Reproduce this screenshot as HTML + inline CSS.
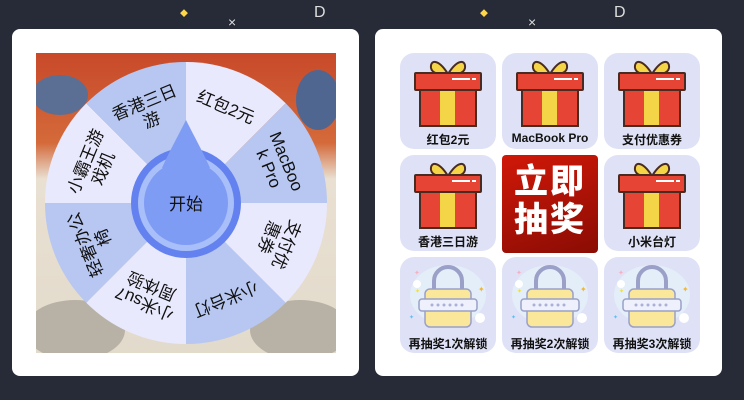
<!DOCTYPE html>
<html><head><meta charset="utf-8"><style>
body{margin:0;width:744px;height:400px;background:#262b37;overflow:hidden;position:relative;font-family:"Liberation Sans","Noto Sans CJK SC",sans-serif}
.card{position:absolute;top:29px;width:347px;height:347px;background:#fff;border-radius:8px}
.cell{position:absolute;width:96px;height:96px;background:#dfe2f6;border-radius:14px;overflow:hidden}
.cell .t{position:absolute;left:0;right:0;top:78px;text-align:center;font-size:12px;font-weight:bold;color:#111;white-space:nowrap}
.go{position:absolute;left:502px;top:155px;width:96px;height:98px;border-radius:4px;background:linear-gradient(160deg,#d01808,#8a0c04);color:#fff;font-weight:900;font-size:34px;line-height:38px;text-align:center;padding-top:8px;box-sizing:border-box;letter-spacing:2px}
.dec{position:absolute;color:#ddd;font-size:14px}
</style></head><body>
<div class="dec" style="left:228px;top:14px">×</div>
<div class="dec" style="left:528px;top:14px">×</div>
<div class="dec" style="left:314px;top:4px;font-size:16px">D</div>
<div class="dec" style="left:614px;top:4px;font-size:16px">D</div>
<div class="dec" style="left:180px;top:8px;color:#ffd54a;font-size:8px">◆</div>
<div class="dec" style="left:480px;top:8px;color:#ffd54a;font-size:8px">◆</div>
<div class="card" style="left:12px"></div>
<div class="card" style="left:375px"></div>
<svg style="position:absolute;left:36px;top:53px" width="300" height="300" viewBox="36 53 300 300">
<defs><linearGradient id="bg" x1="0" y1="0" x2="0" y2="1"><stop offset="0" stop-color="#c8492a"/><stop offset=".3" stop-color="#d46a3a"/><stop offset=".42" stop-color="#e9e0d2"/><stop offset="1" stop-color="#e2dacb"/></linearGradient></defs>
<rect x="36" y="53" width="300" height="300" fill="url(#bg)"/>
<ellipse cx="75" cy="330" rx="50" ry="30" fill="#b8b2a6"/><ellipse cx="300" cy="330" rx="50" ry="30" fill="#b8b2a6"/>
<ellipse cx="60" cy="95" rx="28" ry="20" fill="#5a6f93"/><ellipse cx="318" cy="100" rx="22" ry="30" fill="#4f6690"/>
<path d="M186 203 L186 62 A141 141 0 0 1 285.7 103.3Z" fill="#e9e9fd"/>
<path d="M186 203 L285.7 103.3 A141 141 0 0 1 327 203Z" fill="#b7c7f1"/>
<path d="M186 203 L327 203 A141 141 0 0 1 285.7 302.7Z" fill="#e9e9fd"/>
<path d="M186 203 L285.7 302.7 A141 141 0 0 1 186 344Z" fill="#b7c7f1"/>
<path d="M186 203 L186 344 A141 141 0 0 1 86.3 302.7Z" fill="#e9e9fd"/>
<path d="M186 203 L86.3 302.7 A141 141 0 0 1 45 203Z" fill="#b7c7f1"/>
<path d="M186 203 L45 203 A141 141 0 0 1 86.3 103.3Z" fill="#e9e9fd"/>
<path d="M186 203 L86.3 103.3 A141 141 0 0 1 186 62Z" fill="#b7c7f1"/>
<g font-size="17" text-anchor="middle" fill="#111" font-family="Liberation Sans,Noto Sans CJK SC,sans-serif">
<g transform="rotate(22.5 186 203)"><text x="186" y="105">红包2元</text></g>
<g transform="rotate(67.5 186 203)"><text x="186" y="100">MacBoo</text><text x="186" y="119">k Pro</text></g>
<g transform="rotate(112.5 186 203)"><text x="186" y="100">支付优</text><text x="186" y="119">惠券</text></g>
<g transform="rotate(157.5 186 203)"><text x="186" y="105">小米台灯</text></g>
<g transform="rotate(202.5 186 203)"><text x="186" y="100">小米su7</text><text x="186" y="119">周体验</text></g>
<g transform="rotate(247.5 186 203)"><text x="186" y="100">轻奢办公</text><text x="186" y="119">椅</text></g>
<g transform="rotate(292.5 186 203)"><text x="186" y="100">小霸王游</text><text x="186" y="119">戏机</text></g>
<g transform="rotate(337.5 186 203)"><text x="186" y="100">香港三日</text><text x="186" y="119">游</text></g>
</g>
<circle cx="186" cy="203" r="55" fill="#6382ef"/>
<circle cx="186" cy="203" r="48" fill="#a9bff9"/>
<path d="M186 120 C194 136 204 154 210 168 L162 168 C168 154 178 136 186 120Z" fill="#7f9cf5"/>
<circle cx="186" cy="203" r="42" fill="#7f9cf5"/>
<text x="186" y="210" font-size="17" text-anchor="middle" fill="#111" font-family="Liberation Sans,Noto Sans CJK SC,sans-serif">开始</text>
</svg>
<svg width="0" height="0" style="position:absolute"><defs>
<g id="gift">
<path d="M48 21 C38 5 30 7 31 15 C32 21 42 22 48 21 C54 22 64 21 65 15 C66 7 58 5 48 21Z" fill="#f5d548" stroke="#4a2b22" stroke-width="2"/>
<rect x="20" y="36" width="56" height="37" fill="#e64434" stroke="#4a2b22" stroke-width="2"/>
<rect x="40" y="37" width="15" height="35" fill="#f5d548"/>
<rect x="15" y="20" width="66" height="17" rx="1" fill="#e64434" stroke="#4a2b22" stroke-width="2"/>
<rect x="52" y="25" width="18" height="2" fill="#fff"/><rect x="72" y="25" width="4" height="2" fill="#fff"/>
</g>
<g id="lock">
<ellipse cx="48" cy="38" rx="38" ry="30" fill="#e3eef9"/>
<path d="M34 34 V24 A14 14 0 0 1 62 24 V34" fill="none" stroke="#9aa0c8" stroke-width="4"/>
<rect x="25" y="32" width="46" height="38" rx="5" fill="#fbe79a" stroke="#9aa0c8" stroke-width="1.5"/>
<rect x="19" y="42" width="58" height="12" rx="3" fill="#eef0fb" stroke="#9aa0c8" stroke-width="1.5"/>
<g fill="#aab0d8"><circle cx="32" cy="48" r="1.5"/><circle cx="38" cy="48" r="1.5"/><circle cx="44" cy="48" r="1.5"/><circle cx="50" cy="48" r="1.5"/><circle cx="56" cy="48" r="1.5"/><circle cx="62" cy="48" r="1.5"/></g>
<circle cx="17" cy="27" r="4" fill="#fff"/><circle cx="80" cy="61" r="5" fill="#fff"/>
<text x="78" y="35" font-size="8" fill="#f7b52a">✦</text><text x="15" y="36" font-size="6" fill="#f5e02a">✦</text>
<text x="9" y="62" font-size="6" fill="#5cc0f0">✦</text><text x="14" y="18" font-size="7" fill="#f7b0c0">✦</text>
</g></defs></svg>
<div class="cell" style="left:400px;top:53px"><svg width="96" height="96"><use href="#gift"/></svg><div class="t">红包2元</div></div>
<div class="cell" style="left:502px;top:53px"><svg width="96" height="96"><use href="#gift"/></svg><div class="t">MacBook Pro</div></div>
<div class="cell" style="left:604px;top:53px"><svg width="96" height="96"><use href="#gift"/></svg><div class="t">支付优惠券</div></div>
<div class="cell" style="left:400px;top:155px"><svg width="96" height="96"><use href="#gift"/></svg><div class="t">香港三日游</div></div>
<div class="go">立即<br>抽奖</div>
<div class="cell" style="left:604px;top:155px"><svg width="96" height="96"><use href="#gift"/></svg><div class="t">小米台灯</div></div>
<div class="cell" style="left:400px;top:257px"><svg width="96" height="96"><use href="#lock"/></svg><div class="t">再抽奖1次解锁</div></div>
<div class="cell" style="left:502px;top:257px"><svg width="96" height="96"><use href="#lock"/></svg><div class="t">再抽奖2次解锁</div></div>
<div class="cell" style="left:604px;top:257px"><svg width="96" height="96"><use href="#lock"/></svg><div class="t">再抽奖3次解锁</div></div>
</body></html>
